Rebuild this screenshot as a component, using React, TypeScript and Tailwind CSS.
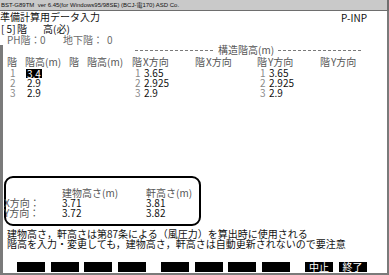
import React from "react";

type Col = {
  width: string;
  label: string;
  labelCell: string;
  numCell: string;
  rows: string[];
};

const COLS: Col[] = [
  { width: "w-[62px]", label: "階高(m)", labelCell: "w-[18px]", numCell: "w-[20px] pl-[3px]", rows: ["3.4", "2.9", "2.9"] },
  { width: "w-[63px]", label: "階高(m)", labelCell: "w-[18px]", numCell: "w-[20px] pl-[3px]", rows: [] },
  { width: "w-[63px]", label: "X方向", labelCell: "w-[11px]", numCell: "w-[12px] pl-[3px]", rows: ["3.65", "2.925", "2.9"] },
  { width: "w-[62px]", label: "X方向", labelCell: "w-[11px]", numCell: "w-[12px] pl-[3px]", rows: [] },
  { width: "w-[63px]", label: "Y方向", labelCell: "w-[11px]", numCell: "w-[12px] pl-[3px]", rows: ["3.65", "2.925", "2.9"] },
  { width: "w-[60px]", label: "Y方向", labelCell: "w-[11px]", numCell: "w-[12px] pl-[3px]", rows: [] },
];

const KEY_GROUPS = [
  ["", "", "", ""],
  ["", "", "", ""],
  ["中止", "終了"],
];

const DASHES = "h-px bg-[repeating-linear-gradient(90deg,#7a7a7a_0_3px,transparent_3px_5px)]";

function FloorColumn({ col }: { col: Col }) {
  return (
    <div className={`${col.width} flex shrink-0 flex-col`}>
      <div className="flex h-[13px] items-center text-[#555]">
        <span className={`${col.labelCell} shrink-0`}>階</span>
        <span>{col.label}</span>
      </div>
      {col.rows.map((v, i) => (
        <div key={i} className="flex h-[10px] items-center">
          <span className={`${col.numCell} shrink-0 text-[#8a8a8a]`}>{i + 1}</span>
          {col.label.startsWith("階") && i === 0 ? (
            <span className="-ml-[1px] inline-block h-[9px] w-[16px] bg-black pl-[1px] leading-[9px] text-white">{v}</span>
          ) : (
            <span>{v}</span>
          )}
        </div>
      ))}
    </div>
  );
}

export default function App() {
  return (
    <div className="flex h-[275px] w-[389px] flex-col overflow-hidden whitespace-pre bg-white font-['Noto_Sans_CJK_JP','Noto_Sans',sans-serif] text-[10px] leading-none text-[#111]">
      <div className="flex h-[11px] shrink-0 items-center border-b border-r-2 border-[#6e6e6e] bg-[#c9c9c9] pl-[1px] font-['Liberation_Sans','Noto_Sans_CJK_JP',sans-serif] text-[6px] text-[#111]">
        BST-G89TM  ver 6.45(for Windows95/98SE) (BCJ-電170) ASD Co.
      </div>

      <div className="flex flex-1 flex-col border-r-2 border-b-2 border-[#7a7a7a]">
        <div className="flex h-[12px] items-center">
          <span>準備計算用データ入力</span>
          <span className="ml-auto mr-[20px] mt-[2px]">P-INP</span>
        </div>
        <div className="flex h-[12px] items-center pl-[1px]">
          <span className="w-[16px] shrink-0">[ 5]</span>
          <span className="w-[26px] shrink-0">階</span>
          <span>高(必)</span>
        </div>
        <div className="flex h-[10px] items-center pl-[7px] text-[#6a6a6a]">
          <span className="w-[33px] shrink-0">PH階：</span>
          <span className="w-[23px] shrink-0">0</span>
          <span className="w-[44px] shrink-0">地下階：</span>
          <span>0</span>
        </div>

        <div className="flex flex-1 flex-col border-l-[3px] border-[#7a7a7a]">
          <div className="flex h-[10px] items-center text-[#555]">
            <div className={`ml-[132px] w-[79px] ${DASHES}`} />
            <span className="mx-[4px]">構造階高(m)</span>
            <div className={`w-[84px] ${DASHES}`} />
          </div>

          <div className="ml-[4px] flex">
            {COLS.map((c, i) => (
              <FloorColumn key={i} col={c} />
            ))}
          </div>

          <div className="ml-[1px] mt-auto flex w-[197px] flex-col rounded-[9px] border-2 border-black pb-[6px] pt-[9px]">
            <div className="flex h-[11px] items-center text-[#555]">
              <span className="w-[56px] shrink-0" />
              <span className="w-[84px] shrink-0">建物高さ(m)</span>
              <span>軒高さ(m)</span>
            </div>
            <div className="flex h-[10px] items-center">
              <span className="-ml-[2px] w-[58px] shrink-0 text-[#555]">X方向：</span>
              <span className="w-[84px] shrink-0">3.71</span>
              <span>3.81</span>
            </div>
            <div className="flex h-[10px] items-center">
              <span className="-ml-[2px] w-[58px] shrink-0 text-[#555]">Y方向：</span>
              <span className="w-[84px] shrink-0">3.72</span>
              <span>3.82</span>
            </div>
          </div>

          <div className="mt-[3px] flex flex-col pl-[4px]">
            <div className="flex h-[10px] items-center">建物高さ，軒高さは第87条による（風圧力）を算出時に使用される</div>
            <div className="flex h-[10px] items-center">階高を入力・変更しても，建物高さ，軒高さは自動更新されないので要注意</div>
          </div>

          <div className="mb-[1px] ml-[14px] mt-[13px] flex gap-[15px]">
            {KEY_GROUPS.map((g, gi) => (
              <div key={gi} className="flex gap-[5.67px]">
                {g.map((k, ki) => (
                  <div key={ki} className="flex h-[10px] w-[28px] items-center justify-center bg-black text-white">
                    {k}
                  </div>
                ))}
              </div>
            ))}
          </div>
        </div>
      </div>
    </div>
  );
}
